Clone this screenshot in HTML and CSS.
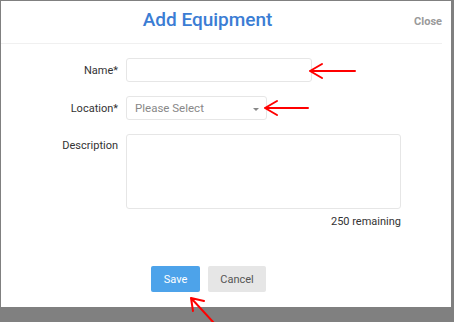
FILE: index.html
```html
<!DOCTYPE html>
<html lang="en">

<head>
    <meta charset="UTF-8">
    <meta name="viewport" content="width=device-width, initial-scale=1.0">
    <title>Add Equipment</title>
    <link rel="stylesheet" href="styles.css">
</head>

<body>
    <div class="dialog">
        <div class="header">
            <h1 class="title">Add Equipment</h1>
            <span class="close">Close</span>
        </div>
        <form class="form">
            <label class="label" for="name">Name*</label>
            <input class="field name" id="name" type="text">

            <label class="label" for="location">Location*</label>
            <div class="field select" id="location">
                <span class="placeholder">Please Select</span>
                <span class="caret"></span>
            </div>

            <label class="label top" for="description">Description</label>
            <div class="desc">
                <textarea class="field textarea" id="description"></textarea>
                <div class="remaining">250 remaining</div>
            </div>
        </form>
        <div class="actions">
            <button class="btn save" type="button">Save</button>
            <button class="btn cancel" type="button">Cancel</button>
        </div>
    </div>

    <svg class="marks" width="454" height="322" viewBox="0 0 454 322">
        <g fill="none" stroke="#f00" stroke-width="2" stroke-linecap="round" stroke-linejoin="round">
            <path d="M310 71 H355 M310 71 L322 64 M310 71 L322 78" />
            <path d="M265 108 H308 M265 108 L277 101 M265 108 L277 115" />
            <path d="M191 298 L214 323 M191 298 L204 301 M191 298 L193 311" />
        </g>
    </svg>
</body>

</html>
```

FILE: styles.css
```css
body {
    font-family: Roboto, "Liberation Sans", sans-serif;
    margin: 0;
    padding: 0;
    width: 454px;
    height: 322px;
    background-color: #808080;
    position: relative;
    overflow: hidden;
}

.dialog {
    background-color: #fff;
    margin: 1px 3px 0 1px;
    height: 306px;
}

.header {
    display: flex;
    align-items: center;
    box-sizing: border-box;
    height: 43px;
    padding-bottom: 5px;
    margin-right: 9px;
    border-bottom: 1px solid #f0f0f0;
}

.title {
    flex: 1;
    margin: 0;
    text-align: center;
    font-size: 19px;
    font-weight: 500;
    color: #3b7dd4;
}

.close {
    font-size: 11px;
    font-weight: bold;
    color: #9a9a9a;
    padding-top: 3px;
}

.form {
    display: grid;
    grid-template-columns: 117px auto;
    column-gap: 8px;
    row-gap: 14px;
    align-items: center;
    padding-top: 14px;
}

.label {
    text-align: right;
    font-size: 11px;
    color: #333;
}

.label.top {
    align-self: start;
    padding-top: 5px;
}

.field {
    box-sizing: border-box;
    border: 1px solid #e6e6e6;
    border-radius: 3px;
    background: #fff;
    height: 24px;
    margin: 0;
}

.name {
    width: 186px;
}

.select {
    width: 141px;
    display: flex;
    align-items: center;
    justify-content: space-between;
    padding: 0 7px 0 8px;
}

.placeholder {
    font-size: 11.5px;
    color: #888;
}

.caret {
    width: 0;
    height: 0;
    border-left: 3px solid transparent;
    border-right: 3px solid transparent;
    border-top: 3px solid #888;
    margin-top: 2px;
}

.desc {
    width: 275px;
}

.textarea {
    display: block;
    width: 275px;
    height: 75px;
    resize: none;
}

.remaining {
    text-align: right;
    font-size: 11px;
    color: #333;
    margin-top: 6px;
}

.actions {
    display: flex;
    gap: 8px;
    padding: 38px 0 0 150px;
}

.btn {
    height: 26px;
    border: none;
    border-radius: 2px;
    font-family: Roboto, "Liberation Sans", sans-serif;
    font-size: 11px;
    cursor: pointer;
}

.save {
    width: 49px;
    color: #fff;
    background-color: #4da3ea;
}

.cancel {
    width: 58px;
    color: #555;
    background-color: #e6e6e6;
}

.marks {
    position: absolute;
    top: 0;
    left: 0;
}
```
